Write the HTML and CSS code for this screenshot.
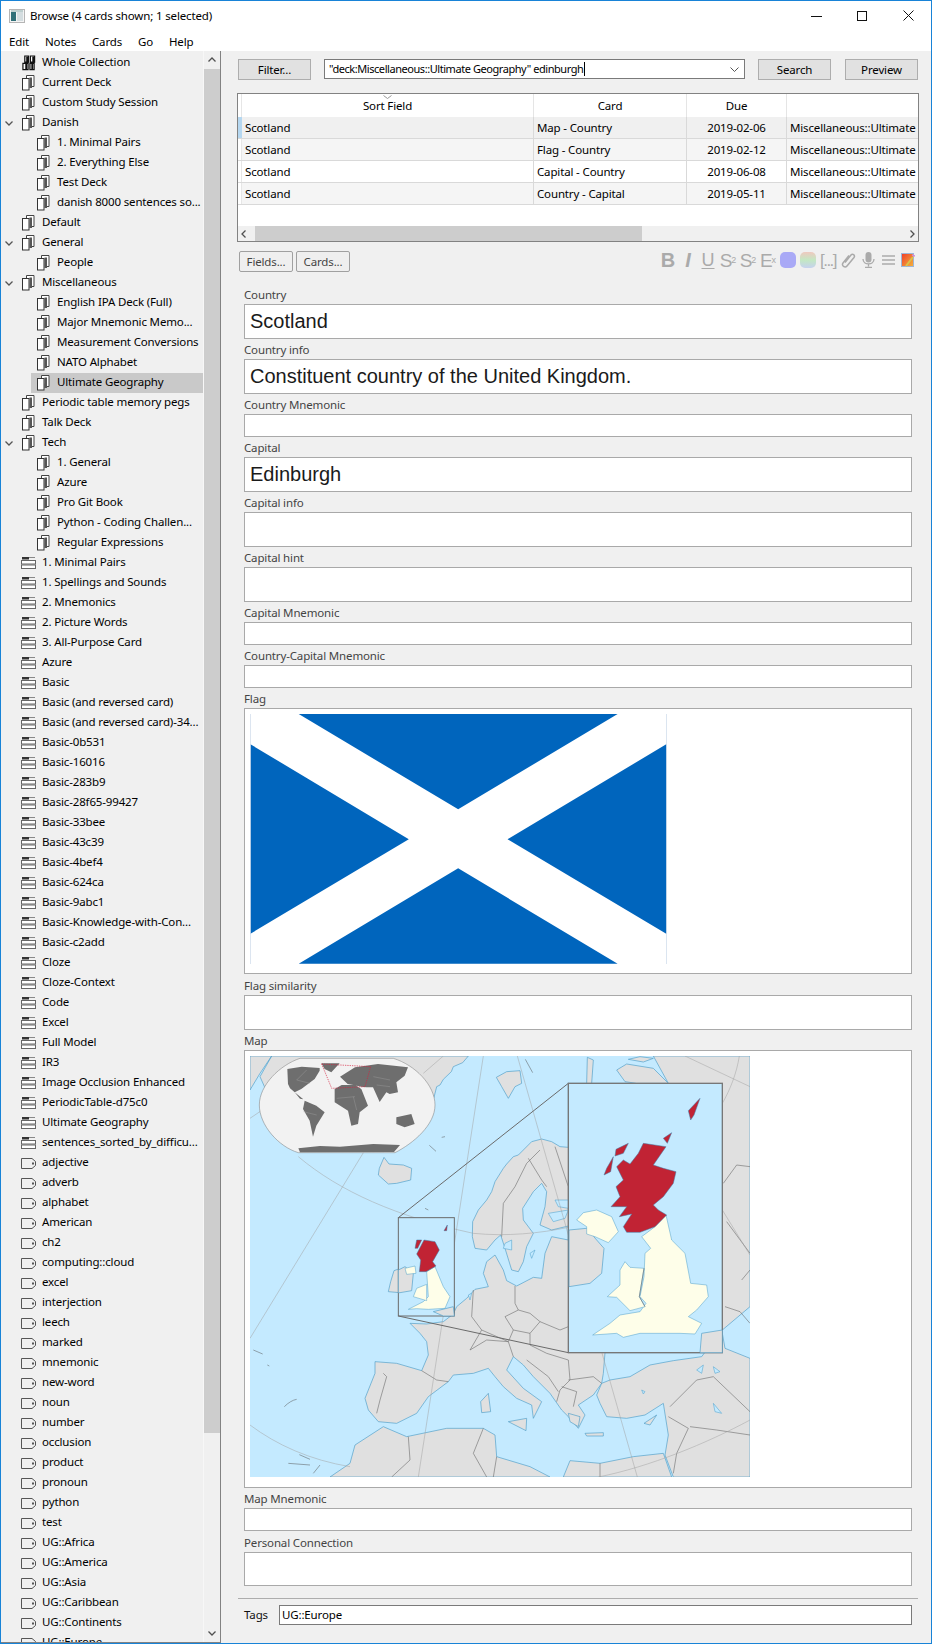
FILE: index.html
```html
<!DOCTYPE html>
<html lang="en">
<head>
<meta charset="utf-8">
<title>Browse (4 cards shown; 1 selected)</title>
<link rel="stylesheet" href="styles.css">
</head>
<body>
<svg class="defs" width="0" height="0" aria-hidden="true">
  <symbol id="deck" viewBox="0 0 14 16">
    <path d="M4.500 3V.5h7.500v11H9" fill="#fff" stroke="#444"/>
    <path d="M7.500 2.500h2.500V13H7.500z" fill="#555"/>
    <rect x=".5" y="3.500" width="6.500" height="11.500" fill="#fff" stroke="#333"/>
  </symbol>
  <symbol id="all" viewBox="0 0 15 16">
    <path d="M3 .5h4v6.500H3zM9 .5h4.500v6.500H9zM1 8.500h5.500V15H1zM8.500 8.500H13V15H8.500z" fill="#fff" stroke="#111" stroke-width="1.300"/>
    <path d="M4.500 1h2v6h-2zM11 1h2v6h-2zM3.500 9h2v6h-2zM10 9h2v6h-2z" fill="#111"/>
  </symbol>
  <symbol id="model" viewBox="0 0 15 12">
    <path d="M1 0h7v2.500H1z" fill="#333"/>
    <path d="M8 .5h6" stroke="#888" fill="none"/>
    <rect x=".5" y="3.500" width="14" height="3.500" fill="#fff" stroke="#666"/>
    <rect x=".5" y="8" width="14" height="3.500" fill="#fff" stroke="#666"/>
  </symbol>
  <symbol id="tag" viewBox="0 0 15 11">
    <path d="M.5.500h10.500l3.500 3v4l-3.500 3H.5z" fill="#f0f0f0" stroke="#555"/>
    <rect x="11" y="4.500" width="2" height="2" fill="#555"/>
  </symbol>
  <symbol id="twisty" viewBox="0 0 8 5">
    <path d="M.5.500 4 4 7.500.5" fill="none" stroke="#555" stroke-width="1.300"/>
  </symbol>
</svg>

<div class="window">
  <header class="titlebar">
    <div class="title-left">
      <svg class="app-icon" width="16" height="14" viewBox="0 0 16 14">
        <rect x=".5" y=".5" width="15" height="13" fill="#f4f4f4" stroke="#b5b5b5"/>
        <rect x="2" y="3" width="5" height="9" fill="#2f6f78"/>
        <rect x="8" y="3" width="6" height="9" fill="#d4dde0"/>
        <rect x="2" y="1.500" width="12" height="1" fill="#8aa"/>
      </svg>
      <span class="title-text">Browse (4 cards shown; 1 selected)</span>
    </div>
    <div class="win-controls">
      <svg width="11" height="10" viewBox="0 0 11 10"><path d="M0 5.500h11" stroke="#111"/></svg>
      <svg width="11" height="10" viewBox="0 0 11 10"><rect x=".5" y=".5" width="9" height="9" fill="none" stroke="#111"/></svg>
      <svg width="11" height="11" viewBox="0 0 11 11"><path d="M.5.500l10 10M10.500.5l-10 10" stroke="#111"/></svg>
    </div>
  </header>
  <nav class="menubar">
    <span class="menu-item m-edit">Edit</span>
    <span class="menu-item m-notes">Notes</span>
    <span class="menu-item m-cards">Cards</span>
    <span class="menu-item m-go">Go</span>
    <span class="menu-item">Help</span>
  </nav>

  <main class="main">
    <aside class="sidebar">
      <div class="tree">
        <div class="row"><span class="tw"></span><div class="cell"><svg class="ico"><use href="#all"/></svg><span class="nm">Whole Collection</span></div></div>
        <div class="row"><span class="tw"></span><div class="cell"><svg class="ico"><use href="#deck"/></svg><span class="nm">Current Deck</span></div></div>
        <div class="row"><span class="tw"></span><div class="cell"><svg class="ico"><use href="#deck"/></svg><span class="nm">Custom Study Session</span></div></div>
        <div class="row"><span class="tw"><svg class="chev"><use href="#twisty"/></svg></span><div class="cell"><svg class="ico"><use href="#deck"/></svg><span class="nm">Danish</span></div></div>
        <div class="row sub"><span class="tw"></span><div class="cell"><svg class="ico"><use href="#deck"/></svg><span class="nm">1. Minimal Pairs</span></div></div>
        <div class="row sub"><span class="tw"></span><div class="cell"><svg class="ico"><use href="#deck"/></svg><span class="nm">2. Everything Else</span></div></div>
        <div class="row sub"><span class="tw"></span><div class="cell"><svg class="ico"><use href="#deck"/></svg><span class="nm">Test Deck</span></div></div>
        <div class="row sub"><span class="tw"></span><div class="cell"><svg class="ico"><use href="#deck"/></svg><span class="nm">danish 8000 sentences so...</span></div></div>
        <div class="row"><span class="tw"></span><div class="cell"><svg class="ico"><use href="#deck"/></svg><span class="nm">Default</span></div></div>
        <div class="row"><span class="tw"><svg class="chev"><use href="#twisty"/></svg></span><div class="cell"><svg class="ico"><use href="#deck"/></svg><span class="nm">General</span></div></div>
        <div class="row sub"><span class="tw"></span><div class="cell"><svg class="ico"><use href="#deck"/></svg><span class="nm">People</span></div></div>
        <div class="row"><span class="tw"><svg class="chev"><use href="#twisty"/></svg></span><div class="cell"><svg class="ico"><use href="#deck"/></svg><span class="nm">Miscellaneous</span></div></div>
        <div class="row sub"><span class="tw"></span><div class="cell"><svg class="ico"><use href="#deck"/></svg><span class="nm">English IPA Deck (Full)</span></div></div>
        <div class="row sub"><span class="tw"></span><div class="cell"><svg class="ico"><use href="#deck"/></svg><span class="nm">Major Mnemonic Memo...</span></div></div>
        <div class="row sub"><span class="tw"></span><div class="cell"><svg class="ico"><use href="#deck"/></svg><span class="nm">Measurement Conversions</span></div></div>
        <div class="row sub"><span class="tw"></span><div class="cell"><svg class="ico"><use href="#deck"/></svg><span class="nm">NATO Alphabet</span></div></div>
        <div class="row sub sel"><span class="tw"></span><div class="cell"><svg class="ico"><use href="#deck"/></svg><span class="nm">Ultimate Geography</span></div></div>
        <div class="row"><span class="tw"></span><div class="cell"><svg class="ico"><use href="#deck"/></svg><span class="nm">Periodic table memory pegs</span></div></div>
        <div class="row"><span class="tw"></span><div class="cell"><svg class="ico"><use href="#deck"/></svg><span class="nm">Talk Deck</span></div></div>
        <div class="row"><span class="tw"><svg class="chev"><use href="#twisty"/></svg></span><div class="cell"><svg class="ico"><use href="#deck"/></svg><span class="nm">Tech</span></div></div>
        <div class="row sub"><span class="tw"></span><div class="cell"><svg class="ico"><use href="#deck"/></svg><span class="nm">1. General</span></div></div>
        <div class="row sub"><span class="tw"></span><div class="cell"><svg class="ico"><use href="#deck"/></svg><span class="nm">Azure</span></div></div>
        <div class="row sub"><span class="tw"></span><div class="cell"><svg class="ico"><use href="#deck"/></svg><span class="nm">Pro Git Book</span></div></div>
        <div class="row sub"><span class="tw"></span><div class="cell"><svg class="ico"><use href="#deck"/></svg><span class="nm">Python - Coding Challen...</span></div></div>
        <div class="row sub"><span class="tw"></span><div class="cell"><svg class="ico"><use href="#deck"/></svg><span class="nm">Regular Expressions</span></div></div>
        <div class="row"><span class="tw"></span><div class="cell"><svg class="ico m"><use href="#model"/></svg><span class="nm">1. Minimal Pairs</span></div></div>
        <div class="row"><span class="tw"></span><div class="cell"><svg class="ico m"><use href="#model"/></svg><span class="nm">1. Spellings and Sounds</span></div></div>
        <div class="row"><span class="tw"></span><div class="cell"><svg class="ico m"><use href="#model"/></svg><span class="nm">2. Mnemonics</span></div></div>
        <div class="row"><span class="tw"></span><div class="cell"><svg class="ico m"><use href="#model"/></svg><span class="nm">2. Picture Words</span></div></div>
        <div class="row"><span class="tw"></span><div class="cell"><svg class="ico m"><use href="#model"/></svg><span class="nm">3. All-Purpose Card</span></div></div>
        <div class="row"><span class="tw"></span><div class="cell"><svg class="ico m"><use href="#model"/></svg><span class="nm">Azure</span></div></div>
        <div class="row"><span class="tw"></span><div class="cell"><svg class="ico m"><use href="#model"/></svg><span class="nm">Basic</span></div></div>
        <div class="row"><span class="tw"></span><div class="cell"><svg class="ico m"><use href="#model"/></svg><span class="nm">Basic (and reversed card)</span></div></div>
        <div class="row"><span class="tw"></span><div class="cell"><svg class="ico m"><use href="#model"/></svg><span class="nm">Basic (and reversed card)-34...</span></div></div>
        <div class="row"><span class="tw"></span><div class="cell"><svg class="ico m"><use href="#model"/></svg><span class="nm">Basic-0b531</span></div></div>
        <div class="row"><span class="tw"></span><div class="cell"><svg class="ico m"><use href="#model"/></svg><span class="nm">Basic-16016</span></div></div>
        <div class="row"><span class="tw"></span><div class="cell"><svg class="ico m"><use href="#model"/></svg><span class="nm">Basic-283b9</span></div></div>
        <div class="row"><span class="tw"></span><div class="cell"><svg class="ico m"><use href="#model"/></svg><span class="nm">Basic-28f65-99427</span></div></div>
        <div class="row"><span class="tw"></span><div class="cell"><svg class="ico m"><use href="#model"/></svg><span class="nm">Basic-33bee</span></div></div>
        <div class="row"><span class="tw"></span><div class="cell"><svg class="ico m"><use href="#model"/></svg><span class="nm">Basic-43c39</span></div></div>
        <div class="row"><span class="tw"></span><div class="cell"><svg class="ico m"><use href="#model"/></svg><span class="nm">Basic-4bef4</span></div></div>
        <div class="row"><span class="tw"></span><div class="cell"><svg class="ico m"><use href="#model"/></svg><span class="nm">Basic-624ca</span></div></div>
        <div class="row"><span class="tw"></span><div class="cell"><svg class="ico m"><use href="#model"/></svg><span class="nm">Basic-9abc1</span></div></div>
        <div class="row"><span class="tw"></span><div class="cell"><svg class="ico m"><use href="#model"/></svg><span class="nm">Basic-Knowledge-with-Con...</span></div></div>
        <div class="row"><span class="tw"></span><div class="cell"><svg class="ico m"><use href="#model"/></svg><span class="nm">Basic-c2add</span></div></div>
        <div class="row"><span class="tw"></span><div class="cell"><svg class="ico m"><use href="#model"/></svg><span class="nm">Cloze</span></div></div>
        <div class="row"><span class="tw"></span><div class="cell"><svg class="ico m"><use href="#model"/></svg><span class="nm">Cloze-Context</span></div></div>
        <div class="row"><span class="tw"></span><div class="cell"><svg class="ico m"><use href="#model"/></svg><span class="nm">Code</span></div></div>
        <div class="row"><span class="tw"></span><div class="cell"><svg class="ico m"><use href="#model"/></svg><span class="nm">Excel</span></div></div>
        <div class="row"><span class="tw"></span><div class="cell"><svg class="ico m"><use href="#model"/></svg><span class="nm">Full Model</span></div></div>
        <div class="row"><span class="tw"></span><div class="cell"><svg class="ico m"><use href="#model"/></svg><span class="nm">IR3</span></div></div>
        <div class="row"><span class="tw"></span><div class="cell"><svg class="ico m"><use href="#model"/></svg><span class="nm">Image Occlusion Enhanced</span></div></div>
        <div class="row"><span class="tw"></span><div class="cell"><svg class="ico m"><use href="#model"/></svg><span class="nm">PeriodicTable-d75c0</span></div></div>
        <div class="row"><span class="tw"></span><div class="cell"><svg class="ico m"><use href="#model"/></svg><span class="nm">Ultimate Geography</span></div></div>
        <div class="row"><span class="tw"></span><div class="cell"><svg class="ico m"><use href="#model"/></svg><span class="nm">sentences_sorted_by_difficu...</span></div></div>
        <div class="row"><span class="tw"></span><div class="cell"><svg class="ico t"><use href="#tag"/></svg><span class="nm">adjective</span></div></div>
        <div class="row"><span class="tw"></span><div class="cell"><svg class="ico t"><use href="#tag"/></svg><span class="nm">adverb</span></div></div>
        <div class="row"><span class="tw"></span><div class="cell"><svg class="ico t"><use href="#tag"/></svg><span class="nm">alphabet</span></div></div>
        <div class="row"><span class="tw"></span><div class="cell"><svg class="ico t"><use href="#tag"/></svg><span class="nm">American</span></div></div>
        <div class="row"><span class="tw"></span><div class="cell"><svg class="ico t"><use href="#tag"/></svg><span class="nm">ch2</span></div></div>
        <div class="row"><span class="tw"></span><div class="cell"><svg class="ico t"><use href="#tag"/></svg><span class="nm">computing::cloud</span></div></div>
        <div class="row"><span class="tw"></span><div class="cell"><svg class="ico t"><use href="#tag"/></svg><span class="nm">excel</span></div></div>
        <div class="row"><span class="tw"></span><div class="cell"><svg class="ico t"><use href="#tag"/></svg><span class="nm">interjection</span></div></div>
        <div class="row"><span class="tw"></span><div class="cell"><svg class="ico t"><use href="#tag"/></svg><span class="nm">leech</span></div></div>
        <div class="row"><span class="tw"></span><div class="cell"><svg class="ico t"><use href="#tag"/></svg><span class="nm">marked</span></div></div>
        <div class="row"><span class="tw"></span><div class="cell"><svg class="ico t"><use href="#tag"/></svg><span class="nm">mnemonic</span></div></div>
        <div class="row"><span class="tw"></span><div class="cell"><svg class="ico t"><use href="#tag"/></svg><span class="nm">new-word</span></div></div>
        <div class="row"><span class="tw"></span><div class="cell"><svg class="ico t"><use href="#tag"/></svg><span class="nm">noun</span></div></div>
        <div class="row"><span class="tw"></span><div class="cell"><svg class="ico t"><use href="#tag"/></svg><span class="nm">number</span></div></div>
        <div class="row"><span class="tw"></span><div class="cell"><svg class="ico t"><use href="#tag"/></svg><span class="nm">occlusion</span></div></div>
        <div class="row"><span class="tw"></span><div class="cell"><svg class="ico t"><use href="#tag"/></svg><span class="nm">product</span></div></div>
        <div class="row"><span class="tw"></span><div class="cell"><svg class="ico t"><use href="#tag"/></svg><span class="nm">pronoun</span></div></div>
        <div class="row"><span class="tw"></span><div class="cell"><svg class="ico t"><use href="#tag"/></svg><span class="nm">python</span></div></div>
        <div class="row"><span class="tw"></span><div class="cell"><svg class="ico t"><use href="#tag"/></svg><span class="nm">test</span></div></div>
        <div class="row"><span class="tw"></span><div class="cell"><svg class="ico t"><use href="#tag"/></svg><span class="nm">UG::Africa</span></div></div>
        <div class="row"><span class="tw"></span><div class="cell"><svg class="ico t"><use href="#tag"/></svg><span class="nm">UG::America</span></div></div>
        <div class="row"><span class="tw"></span><div class="cell"><svg class="ico t"><use href="#tag"/></svg><span class="nm">UG::Asia</span></div></div>
        <div class="row"><span class="tw"></span><div class="cell"><svg class="ico t"><use href="#tag"/></svg><span class="nm">UG::Caribbean</span></div></div>
        <div class="row"><span class="tw"></span><div class="cell"><svg class="ico t"><use href="#tag"/></svg><span class="nm">UG::Continents</span></div></div>
        <div class="row"><span class="tw"></span><div class="cell"><svg class="ico t"><use href="#tag"/></svg><span class="nm">UG::Europe</span></div></div>
      </div>
      <div class="vscroll">
        <div class="vs-btn"><svg width="8" height="5" viewBox="0 0 8 5"><path d="M.5 4.500 4 1l3.500 3.500" fill="none" stroke="#505050" stroke-width="1.300"/></svg></div>
        <div class="vs-thumb"></div>
        <div class="vs-fill"></div>
        <div class="vs-btn"><svg width="8" height="5" viewBox="0 0 8 5"><path d="M.5.500 4 4 7.500.5" fill="none" stroke="#505050" stroke-width="1.300"/></svg></div>
      </div>
    </aside>

    <section class="pane">
      <div class="searchbar">
        <button class="btn">Filter...</button>
        <div class="combo">
          <span class="combo-text">"deck:Miscellaneous::Ultimate Geography" edinburgh</span><span class="caret"></span>
          <svg class="combo-arrow" width="9" height="5" viewBox="0 0 9 5"><path d="M.5.500l4 4 4-4" fill="none" stroke="#555"/></svg>
        </div>
        <button class="btn">Search</button>
        <button class="btn btn-preview">Preview</button>
      </div>

      <div class="table">
        <div class="table-head">
          <span class="vhead"></span>
          <div class="th c1">Sort Field<svg class="sort" width="9" height="4" viewBox="0 0 9 4"><path d="M.5.500l4 3 4-3" fill="none" stroke="#999"/></svg></div>
          <div class="th c2">Card</div>
          <div class="th c3">Due</div>
          <div class="th c4"></div>
        </div>
        <div class="tr r-sel"><span class="vhead"></span><div class="td c1">Scotland</div><div class="td c2">Map - Country</div><div class="td c3">2019-02-06</div><div class="td c4">Miscellaneous::Ultimate</div></div>
        <div class="tr r-alt"><span class="vhead"></span><div class="td c1">Scotland</div><div class="td c2">Flag - Country</div><div class="td c3">2019-02-12</div><div class="td c4">Miscellaneous::Ultimate</div></div>
        <div class="tr"><span class="vhead"></span><div class="td c1">Scotland</div><div class="td c2">Capital - Country</div><div class="td c3">2019-06-08</div><div class="td c4">Miscellaneous::Ultimate</div></div>
        <div class="tr r-alt"><span class="vhead"></span><div class="td c1">Scotland</div><div class="td c2">Country - Capital</div><div class="td c3">2019-05-11</div><div class="td c4">Miscellaneous::Ultimate</div></div>
        <div class="table-empty"></div>
        <div class="hscroll">
          <svg class="hs-arrow" width="5" height="8" viewBox="0 0 5 8"><path d="M4.500.5 1 4l3.500 3.500" fill="none" stroke="#505050" stroke-width="1.300"/></svg>
          <div class="hs-thumb"></div>
          <svg class="hs-arrow" width="5" height="8" viewBox="0 0 5 8"><path d="M.5.500 4 4 .5 7.500" fill="none" stroke="#505050" stroke-width="1.300"/></svg>
        </div>
      </div>

      <div class="editbar">
        <div class="editbar-btns">
          <button class="btn btn-soft">Fields...</button>
          <button class="btn btn-soft">Cards...</button>
        </div>
        <div class="tools">
          <span class="tool t-b">B</span>
          <span class="tool t-i">I</span>
          <span class="tool t-u">U</span>
          <span class="tool t-s">S<sup>2</sup></span>
          <span class="tool t-s">S<sub>2</sub></span>
          <span class="tool t-s">E<sub>x</sub></span>
          <span class="tool"><span class="swatch sw-blue"></span></span>
          <span class="tool"><span class="swatch sw-grad"></span></span>
          <span class="tool t-c">[...]</span>
          <span class="tool"><svg width="15" height="16" viewBox="0 0 15 16"><path d="M4 10.500 10 3c1.500-1.800 4.500.2 3 2.500L6 14c-2 2.400-6-.3-4-3l6-7.500" fill="none" stroke="#aaa" stroke-width="1.500"/></svg></span>
          <span class="tool"><svg width="13" height="16" viewBox="0 0 13 16"><rect x="3.500" y="0" width="6" height="10.500" rx="3" fill="#aaa"/><path d="M1 7c0 6.500 11 6.500 11 0M6.500 12v2.500M3 15.300h7" fill="none" stroke="#aaa" stroke-width="1.300"/></svg></span>
          <span class="tool"><svg width="13" height="12" viewBox="0 0 13 12"><path d="M0 2h13M0 6h13M0 10h13" stroke="#aaa" stroke-width="1.500"/></svg></span>
          <span class="tool"><svg width="14" height="15" viewBox="0 0 14 15"><defs><linearGradient id="ed" x1="0" y1="0" x2="1" y2="1"><stop offset="0" stop-color="#ee3b2a"/><stop offset="1" stop-color="#f5b53c"/></linearGradient></defs><rect x=".5" y=".5" width="12" height="13" fill="url(#ed)" stroke="#9db6d8"/><path d="M5 13 12 4" stroke="#d9c24a" stroke-width="2"/><path d="M11 2l3 1" stroke="#d88bd0" stroke-width="1.500"/></svg></span>
        </div>
      </div>

      <div class="fields">
        <div class="lbl">Country</div>
        <div class="box tall">Scotland</div>
        <div class="lbl">Country info</div>
        <div class="box tall">Constituent country of the United Kingdom.</div>
        <div class="lbl">Country Mnemonic</div>
        <div class="box short"></div>
        <div class="lbl">Capital</div>
        <div class="box tall">Edinburgh</div>
        <div class="lbl">Capital info</div>
        <div class="box tall"></div>
        <div class="lbl">Capital hint</div>
        <div class="box tall"></div>
        <div class="lbl">Capital Mnemonic</div>
        <div class="box short"></div>
        <div class="lbl">Country-Capital Mnemonic</div>
        <div class="box short"></div>
        <div class="lbl">Flag</div>
        <div class="box flag-box">
          <svg class="flag" width="417" height="250" viewBox="76 222 1250 750" preserveAspectRatio="none">
            <rect x="76" y="222" width="1250" height="750" fill="#fff"/>
            <path d="M222 222H1178L700 508zM76 312 552 598 76 882zM222 971 700 685 1178 971zM1325 312 848 598 1325 882z" fill="#0065bd"/>
            <path d="M77 222V972M1325 222V972" stroke="#d5e0ee" stroke-width="3"/>
          </svg>
        </div>
        <div class="lbl lbl-wide">Flag similarity</div>
        <div class="box tall"></div>
        <div class="lbl">Map</div>
        <div class="box map-box">
          <svg class="map" width="500" height="421" viewBox="30 48 1500 1263">
            <rect class="sea" x="30" y="48" width="1500" height="1263"/>
            <!-- Greenland, behind the locator -->
            <path class="land" d="M30 48H685L668 68 640 80 634 95 610 118 600 135 590 140 582 172 560 215 300 300 100 200 60 110 95 48 60 100 30 150z"/>
            <!-- Europe and Russia -->
            <path class="land" d="M1530 48H1240L1285 130H985V322L960 320 935 305 905 297 875 305 850 330 835 345 820 350 800 372 790 385 765 425 755 455 740 480 715 510 698 545 697 590 705 625 740 630 765 600 782 585 795 625 815 690 835 695 850 665 860 620 880 580 850 540 848 505 880 455 905 430 920 455 915 500 900 555 935 570 985 558V600L935 590 915 640 905 715 880 712 830 738 800 722 790 690 765 645 740 665 730 700 745 740 705 748 680 775 650 800 640 822 610 845 560 852 510 850 540 880 560 905 565 945 545 992 470 970 405 965 405 1000 385 1050 375 1075 385 1110 415 1145 470 1150 530 1120 565 1070 625 1025 640 1005 700 1000 745 985 765 1010 790 1040 830 1075 875 1095 880 1135 905 1085 850 1045 800 990 820 950 850 975 880 1010 930 1060 965 1110 985 1130 1015 1165 1035 1125 1015 1095 1060 1065 1085 1030 1090 1000 1095 938H1400L1447 870 1530 800z"/>
            <!-- Turkey, the Middle East and the Caspian shore -->
            <path class="land" d="M1085 1030 1110 1020 1170 1010 1230 975 1300 962 1385 950 1400 930 1447 880 1455 925 1530 955V1311H1300L1275 1245 1285 1185 1270 1090 1215 1125 1160 1135 1100 1130 1080 1090 1070 1065z"/>
            <!-- North Africa -->
            <path class="land" d="M270 1311 330 1270 345 1215 430 1160 500 1190 620 1165 730 1165 765 1185 770 1250 870 1280 930 1311zM970 1311 990 1262 1080 1270 1180 1250 1270 1240 1295 1311z"/>
            <!-- islands -->
            <path class="land" d="M415 405 418 385 432 352 447 372 490 375 515 385 512 420 470 430 445 432z"/>
            <path class="land" d="M445 755 452 725 462 692 495 680 520 700 515 752 480 758z"/>
            <path class="land" d="M722 1085 745 1060 752 1115 725 1118zM805 1145 860 1135 858 1172zM1212 1150 1250 1125 1230 1155zM1035 1180 1090 1178 1090 1188 1040 1188zM985 1120 1020 1130 1015 1160 990 1145z"/>
            <path class="land" d="M769 112 800 95 840 92 845 130 825 140 805 175 785 140z"/>
            <path class="land" d="M1040 130 1042 52 1060 60 1055 130z"/>
            <path class="land" d="M1130 90 1160 72 1240 85 1285 130H1190L1155 125z"/>
            <path class="land" d="M1165 58 1200 50 1240 55 1210 66z"/>
            <!-- country borders -->
            <path class="bd" d="M785 590 790 490 825 440 860 370 900 330M865 355 905 420 920 440M945 320 985 440V560M825 738V790L835 810 795 830 820 870 805 905M835 810 870 820 900 845 960 870 985 860M700 750 695 830 725 870 690 930 740 900 805 905 820 950M725 870 805 905M820 870 870 880 900 845M870 880V915L920 940M920 940 985 960 990 1020 960 1050 950 1085M860 960 925 1010 955 1055M985 1020 1060 1010 1085 1030M430 1000 440 1010 420 1080 410 1120M545 992 590 1020 625 1025M1290 1100 1370 1020 1420 1010 1530 1115M1350 1160 1430 1170 1530 1185M1285 1130 1345 1165 1310 1240 1300 1300M505 1190 510 1260 455 1311M730 1165 700 1240 740 1311M770 1250 760 1311M1080 1270V1311M1450 430 1490 375 1530 380M1455 800 1500 815 1530 850M1505 720 1530 690M1460 545 1530 640M965 1040 1010 1055 1000 1100"/>
            <!-- lakes -->
            <path class="lake" d="M795 610 815 600 815 630 790 625zM870 640 885 630 875 655zM685 765 695 760 690 780zM1370 990 1390 975 1385 1000zM1420 980 1440 995 1425 1000zM1420 1090 1445 1120 1425 1115zM1205 1050 1215 1055 1210 1062z"/>
            <path class="lake" d="M925 520 985 510 975 535 940 545zM945 480 985 480V505L955 500z"/>
            <!-- stray islands -->
            <path class="coast" d="M133 1100C145 1088 158 1080 170 1078M178 1244 210 1258M568 316 588 334M856 58 878 98M605 292 615 290M555 505 565 510M550 550 585 545M40 930 68 942M82 975 88 978M615 560 625 555M240 1275 220 1300M145 1270 210 1275"/>
            <!-- graticule -->
            <path class="grat" d="M30 235 185 130M175 350C300 455 470 530 700 580 800 590 900 580 985 562M30 895 375 330M30 1155C110 1215 210 1260 330 1280M730 48 535 1311M832 48 1192 1311M1075 1311C1230 1280 1400 1210 1530 1140M1498 48C1490 100 1470 150 1447 190M1335 48 1530 140M1447 510 1530 645M610 48 550 100"/>

            <!-- world locator -->
            <path class="globe" d="M180 55H460C525 75 585 135 585 195 585 255 520 310 465 338H175C115 320 58 255 58 195 58 135 120 75 180 55z"/>
            <path class="wld" d="M142 87 185 80 239 84 239 92 224 117 204 132 184 147 164 157 150 145 144 132zM164 157 190 178 180 176zM244 70 299 70 274 97 254 87zM194 182 229 197 254 217 229 257 219 290 209 242 189 207zM284 147 305 135 345 135 364 147 384 197 359 217 354 252 334 257 324 212 284 187zM323 132 300 110 345 82 414 72 504 82 494 107 469 127 474 157 449 162 439 157 419 186 399 142 379 142 364 140 340 135zM469 232 514 222 524 252 494 262 469 252zM175 325 240 318 300 320 400 312 480 315 462 336 180 337z"/>
            <path class="wld-line" d="M170 120 210 130M190 215 230 225M340 170 350 210M290 175 345 170M400 110 450 120M200 90 170 120M410 135 450 140"/>
            <path class="locator" d="M245 72 392 80 375 140 275 145z"/>

            <!-- small inset UK -->
            <rect class="inset-small" x="475" y="533" width="168" height="295"/>
            <path class="land" d="M475 690 495 680 520 700 515 752 480 758 475 758z"/>
            <path class="uk" d="M495 685 525 678 528 700 500 703z"/>
            <path class="uk" d="M560 695 585 680 610 740 630 770 615 805 565 808 530 806 505 808 550 785 565 770z"/>
            <path class="uk" d="M530 745 560 733 560 782 520 770z"/>
            <path class="sco" d="M552 600 585 605 598 630 578 665 588 678 558 695 538 695 542 660 530 642z"/>
            <path class="sco" d="M525 625 530 600 545 600 533 625zM612 572 622 555 620 572z"/>
            <path class="land" d="M580 815 640 800 643 828 610 828z"/>
            <path class="zoomline" d="M985 130 475 533M475 828 985 938"/>

            <!-- large inset UK -->
            <rect class="inset" x="985" y="130" width="462" height="808"/>
            <path class="land" d="M987 570 1040 565 1070 600 1092 625 1085 700 1050 730 987 740z"/>
            <path class="uk" d="M1010 540 1030 518 1070 510 1115 530 1135 575 1105 608 1065 590 1040 582 1040 560z"/>
            <path class="uk" d="M1278 525 1295 600 1335 640 1352 730 1400 735 1405 770 1370 810 1345 830 1385 850 1365 882 1320 880 1200 880 1150 892 1130 880 1058 885 1110 850 1140 825 1200 815 1218 790 1200 770 1212 710 1215 640 1232 625 1205 590 1245 560z"/>
            <path class="uk" d="M1140 690 1155 665 1170 682 1212 685 1198 770 1215 800 1170 812 1130 772 1102 770 1140 735z"/>
            <path class="sco" d="M1210 310 1278 320 1240 375 1270 385 1308 395 1300 430 1270 470 1240 495 1255 510 1280 525 1245 560 1200 577 1160 577 1150 560 1175 522 1138 530 1160 500 1113 500 1140 470 1128 440 1150 420 1130 380 1150 360 1170 372 1195 340z"/>
            <path class="sco" d="M1128 328 1165 310 1150 340 1125 348zM1100 385 1120 350 1112 395 1092 405zM1270 295 1295 278 1282 310zM1345 212 1380 175 1362 225 1352 240z"/>
            <path class="bd" d="M1212 685 1198 770 1215 800"/>
            <path class="land" d="M1380 938 1385 880 1447 870V938z"/>
          </svg>
        </div>
        <div class="lbl">Map Mnemonic</div>
        <div class="box short"></div>
        <div class="lbl lbl-wide">Personal Connection</div>
        <div class="box last"></div>
      </div>

      <div class="tagsbar">
        <span class="tags-label">Tags</span>
        <div class="tags-input">UG::Europe</div>
      </div>
    </section>
  </main>
</div>
</body>
</html>
```
FILE: styles.css
```css
* { box-sizing: border-box; }
html, body { margin: 0; padding: 0; }
body {
  width: 932px;
  height: 1644px;
  overflow: hidden;
  background: #fff;
  color: #000;
  font-family: "Noto Sans", "Open Sans", sans-serif;
  font-size: 11.5px;
  letter-spacing: -0.15px;
}
.defs { position: absolute; }

.window {
  width: 932px;
  height: 1644px;
  border: 1px solid #1883d7;
  display: flex;
  flex-direction: column;
  overflow: hidden;
}

/* title bar */
.titlebar {
  height: 29px;
  flex: none;
  display: flex;
  justify-content: space-between;
  align-items: center;
  background: #fff;
  padding: 0 17px 0 8px;
}
.title-left { display: flex; align-items: center; gap: 5px; }
.win-controls { display: flex; align-items: center; gap: 35px; }

.menubar {
  height: 21px;
  flex: none;
  display: flex;
  align-items: center;
  padding: 2px 0 0 8px;
  background: #fff;
}
.menu-item { display: block; }
.m-edit { width: 36px; }
.m-notes { width: 47px; }
.m-cards { width: 46px; }
.m-go { width: 31px; }

.main { flex: 1; min-height: 0; display: flex; background: #f0f0f0; }

/* sidebar */
.sidebar {
  width: 220px;
  flex: none;
  display: flex;
  border-right: 1px solid #828282;
  border-bottom: 1px solid #828282;
  overflow: hidden;
}
.tree { width: 202px; flex: none; padding-top: 2px; overflow: hidden; }
.row { height: 20px; display: flex; padding-left: 4px; }
.row.sub { padding-left: 19px; }
.tw { width: 11px; flex: none; display: flex; align-items: center; }
.chev { width: 8px; height: 5px; }
.cell { flex: 1; min-width: 0; display: flex; align-items: center; padding-left: 6px; gap: 6px; white-space: nowrap; overflow: hidden; }
.sel .cell { background: #c9c9c9; }
.ico { width: 14px; height: 16px; flex: none; }
.ico.m { width: 15px; height: 12px; margin-left: -1px; }
.ico.t { width: 15px; height: 11px; margin-left: -1px; }
.nm { line-height: 18px; padding-bottom: 2px; }

.vscroll { width: 17px; flex: none; display: flex; flex-direction: column; border-left: 1px solid #f7f7f7; background: #f0f0f0; }
.vs-btn { height: 17px; flex: none; display: flex; align-items: center; justify-content: center; }
.vs-thumb { height: 1364px; flex: none; background: #cdcdcd; margin-top: 1px; }
.vs-fill { flex: 1; }

/* right pane */
.pane { flex: 1; min-width: 0; padding: 8px 13px 0 17px; display: flex; flex-direction: column; }
.searchbar { display: flex; height: 21px; align-items: stretch; flex: none; }
.btn {
  width: 73px;
  height: 21px;
  padding: 0;
  background: #e1e1e1;
  border: 1px solid #adadad;
  font: inherit;
  letter-spacing: inherit;
  color: #000;
}
.btn-preview { margin-left: 14px; }
.combo {
  width: 421px;
  height: 20px;
  margin: 0 13px;
  background: #fff;
  border: 1px solid #7a7a7a;
  display: flex;
  align-items: center;
  padding-left: 4px;
  font-size: 11px;
  letter-spacing: -0.44px;
  white-space: nowrap;
}
.combo-text { line-height: 18px; }
.caret { width: 1px; height: 14px; background: #000; margin-left: 1px; flex: none; }
.combo-arrow { margin-left: auto; margin-right: 5px; }

.table {
  margin: 13px -1px 0;
  height: 149px;
  flex: none;
  border: 1px solid #828282;
  background: #fff;
  display: flex;
  flex-direction: column;
}
.table-head, .tr { display: flex; flex: none; }
.table-head { height: 23px; background: #fff; }
.tr { height: 22px; border-bottom: 1px solid #d9d9d9; }
.r-sel { background: #f0f0f0; }
.r-alt { background: #f5f5f5; }
.vhead { width: 4px; flex: none; background: #fff; border-right: 1px solid #e6e6e6; }
.r-sel .vhead { background: #b5d7f0; border-right: 0; }
.c1 { width: 292px; flex: none; }
.c2 { width: 153px; flex: none; }
.c3 { width: 100px; flex: none; }
.c4 { flex: 1; min-width: 0; overflow: hidden; white-space: nowrap; }
.th { text-align: center; line-height: 24px; border-right: 1px solid #e5e5e5; position: relative; }
.th.c4 { border-right: 0; }
.sort { position: absolute; left: 141px; top: 1px; }
.td { line-height: 21px; padding-left: 3px; border-right: 1px solid #d9d9d9; white-space: nowrap; }
.td.c3 { text-align: center; padding-left: 0; }
.td.c4 { border-right: 0; }
.table-empty { flex: 1; background: #fff; }
.hscroll { height: 15px; flex: none; display: flex; align-items: center; background: #f0f0f0; padding: 0 3px; }
.hs-thumb { width: 387px; height: 15px; background: #cdcdcd; margin: 0 auto 0 9px; }

.editbar { margin-top: 9px; height: 21px; display: flex; justify-content: space-between; padding-left: 1px; flex: none; }
.editbar-btns { display: flex; gap: 3px; }
.btn-soft { width: 54px; background: #efefef; border-color: #a0a0a0; border-radius: 2px; color: #444; }
.tools { display: flex; }
.tool { width: 20px; height: 18px; display: flex; align-items: center; justify-content: center; color: #aaa; font-family: "Liberation Sans", sans-serif; font-size: 16px; letter-spacing: 0; line-height: 1; white-space: nowrap; }
.t-b { font-size: 20px; font-weight: 700; }
.t-i { font-size: 20px; font-weight: 700; font-style: italic; }
.t-u { font-size: 18px; text-decoration: underline; text-underline-offset: 2px; text-decoration-thickness: 1px; }
.t-s { font-size: 19px; letter-spacing: -1px; }
.tool sup, .tool sub { font-size: 9px; line-height: 0; letter-spacing: 0; }
.t-c { font-size: 17px; letter-spacing: -1.500px; }
.swatch { width: 16px; height: 16px; border-radius: 5px; display: block; }
.sw-blue { background: #a9a9f6; }
.sw-grad { background: linear-gradient(#efc9bf, #c3e8c3 50%, #c6d2ef); }

/* fields */
.fields { margin-top: 12px; padding: 0 6px; flex: none; }
.lbl { height: 20px; line-height: 21px; color: #444; }
.lbl-wide { height: 21px; line-height: 23px; }
.box { background: #fff; border: 1px solid #a9a9a9; font-family: "Liberation Sans", sans-serif; font-size: 20px; letter-spacing: 0; color: #1a1a1a; padding: 5px; line-height: 23px; }
.tall { height: 35px; }
.short { height: 23px; }
.last { height: 34px; }
.flag-box { height: 266px; }
.map-box { height: 438px; }
.flag, .map { display: block; }
.sea { fill: #c4eaff; }
.land { fill: #e0e0e0; stroke: #4f9fc9; stroke-width: 2; stroke-linejoin: round; }
.bd { fill: none; stroke: #6c6c6c; stroke-width: 1.800; stroke-linejoin: round; }
.lake { fill: #c4eaff; stroke: #5aa8d0; stroke-width: 1.800; }
.coast { fill: none; stroke: #555; stroke-width: 1.500; }
.grat { fill: none; stroke: #a3a3a3; stroke-width: 1.500; }
.globe { fill: #f2f2f2; stroke: #777; stroke-width: 1.500; }
.wld { fill: #6e6e6e; }
.wld-line { fill: none; stroke: #aaa; stroke-width: 1; }
.locator { fill: none; stroke: #d6213f; stroke-width: 2; stroke-dasharray: 4 3; }
.inset-small { fill: #c4eaff; stroke: #6a6a6a; stroke-width: 3; }
.inset { fill: #c4eaff; stroke: #777; stroke-width: 4; }
.uk { fill: #fefee9; stroke: #4f9fc9; stroke-width: 1.500; stroke-linejoin: round; }
.sco { fill: #c12334; stroke: #3f7fa8; stroke-width: 1.500; stroke-linejoin: round; }
.zoomline { fill: none; stroke: #6a6a6a; stroke-width: 3; }

/* tags */
.tagsbar {
  margin-top: 12px;
  border-top: 1px solid #adadad;
  padding: 6px 6px 0;
  display: flex;
  align-items: flex-start;
  flex: none;
}
.tags-label { width: 35px; line-height: 20px; color: #111; }
.tags-input { flex: 1; height: 20px; background: #fff; border: 1px solid #7a7a7a; line-height: 18px; padding-left: 2px; }
```
